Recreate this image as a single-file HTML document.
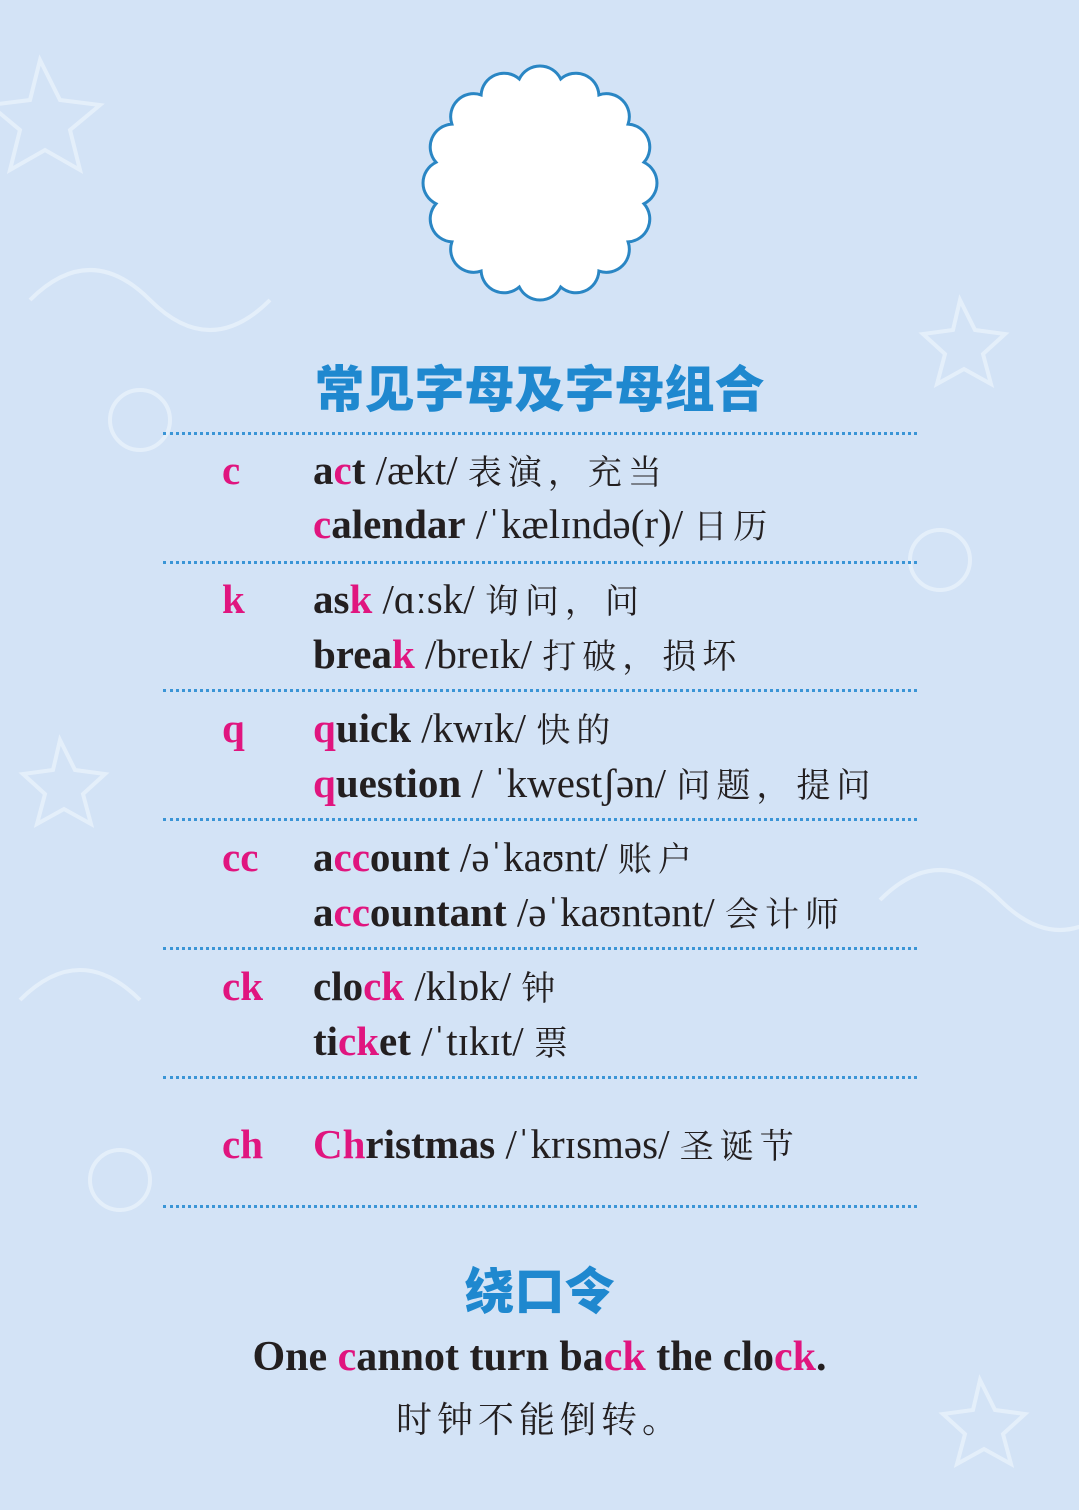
<!DOCTYPE html>
<html><head><meta charset="utf-8">
<style>
html,body{margin:0;padding:0}
body{width:1079px;height:1510px;position:relative;overflow:hidden;background:#d3e3f6;font-family:"Liberation Serif","Noto Serif CJK SC",serif;color:#231f20}
.title{position:absolute;left:0;width:1079px;text-align:center;color:#1f88cf;font-family:"Liberation Sans","Noto Sans CJK SC",sans-serif;font-weight:900;}
.dl{position:absolute;left:163px;width:754px;border-top:3px dotted #3a95d6}
.row{position:absolute;font-size:41px;white-space:nowrap;line-height:44px}
.k{left:222px;color:#e0157f;font-weight:bold}
.w{left:313px}
b{font-weight:bold}
.p{color:#e0157f}
.cn{font-family:"Noto Serif CJK SC",serif;font-size:34px;letter-spacing:6px}
</style></head><body>
<svg width="1079" height="1510" style="position:absolute;left:0;top:0">
<g fill="none" stroke="#e9f1fb" stroke-width="4" opacity="0.8">
<path d="M40 60 l20 40 l40 5 l-30 25 l10 40 l-35 -20 l-35 20 l10 -40 l-30 -25 l40 -5z"/>
<path d="M960 300 l15 30 l30 4 l-22 20 l8 30 l-27 -15 l-27 15 l8 -30 l-22 -20 l30 -4z"/>
<path d="M60 740 l15 30 l30 4 l-22 20 l8 30 l-27 -15 l-27 15 l8 -30 l-22 -20 l30 -4z"/>
<path d="M980 1380 l15 30 l30 4 l-22 20 l8 30 l-27 -15 l-27 15 l8 -30 l-22 -20 l30 -4z"/>
<circle cx="140" cy="420" r="30"/><circle cx="940" cy="560" r="30"/><circle cx="120" cy="1180" r="30"/>
<path d="M30 300 q60 -60 120 0 t120 0"/><path d="M880 900 q60 -60 120 0 t120 0"/><path d="M20 1000 q60 -60 120 0"/>
</g>
</svg>
<svg width="260" height="260" style="position:absolute;left:410px;top:53px">
<path id="sc" fill="#fff" stroke="#2a86c4" stroke-width="3"/>
</svg>
<script>
(function(){var cx=130,cy=130,R=106,n=16,d="";for(var i=0;i<=n;i++){var a=(i/n)*2*Math.PI-Math.PI/2+Math.PI/n;var x=cx+R*Math.cos(a),y=cy+R*Math.sin(a);if(i==0)d+="M"+x.toFixed(1)+" "+y.toFixed(1);else d+=" A23 23 0 0 1 "+x.toFixed(1)+" "+y.toFixed(1);}document.getElementById("sc").setAttribute("d",d+"Z");})();
</script>
<div class="title" style="top:350px;font-size:50px;letter-spacing:0px">常见字母及字母组合</div>
<div class="dl" style="top:432px"></div>
<div class="dl" style="top:561px"></div>
<div class="dl" style="top:689px"></div>
<div class="dl" style="top:818px"></div>
<div class="dl" style="top:947px"></div>
<div class="dl" style="top:1076px"></div>
<div class="dl" style="top:1205px"></div>

<div class="row k" style="top:448px">c</div>
<div class="row w" style="top:448px"><b>a<span class="p">c</span>t</b> /ækt/ <span class="cn">表演，充当</span></div>
<div class="row w" style="top:502px"><b><span class="p">c</span>alendar</b> /ˈkælɪndə(r)/ <span class="cn">日历</span></div>

<div class="row k" style="top:577px">k</div>
<div class="row w" style="top:577px"><b>as<span class="p">k</span></b> /ɑːsk/ <span class="cn">询问，问</span></div>
<div class="row w" style="top:632px"><b>brea<span class="p">k</span></b> /breɪk/ <span class="cn">打破，损坏</span></div>

<div class="row k" style="top:706px">q</div>
<div class="row w" style="top:706px"><b><span class="p">q</span>uick</b> /kwɪk/ <span class="cn">快的</span></div>
<div class="row w" style="top:761px"><b><span class="p">q</span>uestion</b> / ˈkwestʃən/ <span class="cn">问题，提问</span></div>

<div class="row k" style="top:835px">cc</div>
<div class="row w" style="top:835px"><b>a<span class="p">cc</span>ount</b> /əˈkaʊnt/ <span class="cn">账户</span></div>
<div class="row w" style="top:890px"><b>a<span class="p">cc</span>ountant</b> /əˈkaʊntənt/ <span class="cn">会计师</span></div>

<div class="row k" style="top:964px">ck</div>
<div class="row w" style="top:964px"><b>clo<span class="p">ck</span></b> /klɒk/ <span class="cn">钟</span></div>
<div class="row w" style="top:1019px"><b>ti<span class="p">ck</span>et</b> /ˈtɪkɪt/ <span class="cn">票</span></div>

<div class="row k" style="top:1122px">ch</div>
<div class="row w" style="top:1122px"><b><span class="p">Ch</span>ristmas</b> /ˈkrɪsməs/ <span class="cn">圣诞节</span></div>

<div class="title" style="top:1252px;font-size:50px">绕口令</div>
<div class="row" style="left:0;width:1079px;text-align:center;top:1335px;font-weight:bold;font-size:42px">One <span class="p">c</span>annot turn ba<span class="p">c</span><span class="p">k</span> the clo<span class="p">ck</span>.</div>
<div class="row" style="left:0;width:1079px;text-align:center;top:1396px"><span class="cn" style="font-size:36px;letter-spacing:5px">时钟不能倒转。</span></div>
</body></html>
